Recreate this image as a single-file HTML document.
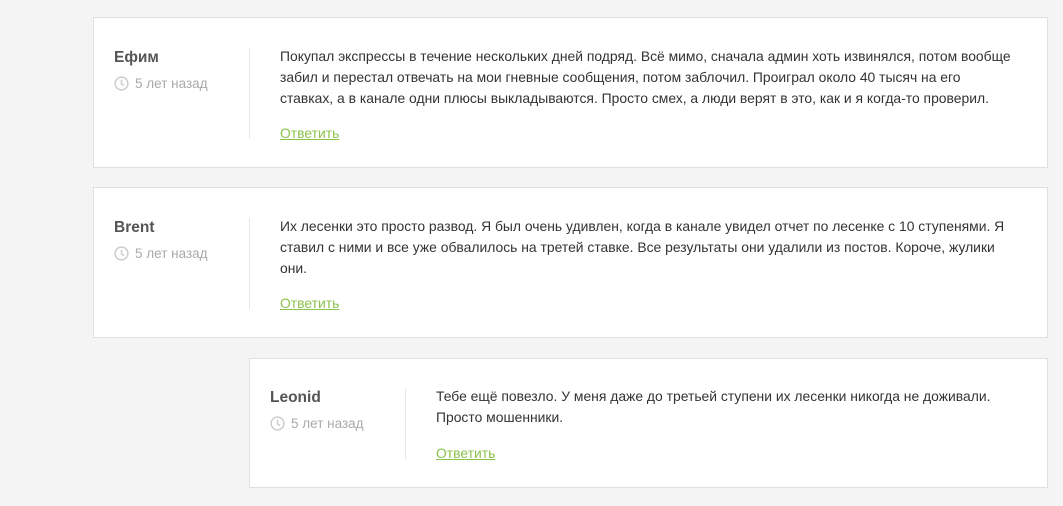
<!DOCTYPE html>
<html><head><meta charset="utf-8"><style>
body{margin:0;background:#f4f4f4;width:1063px;height:506px;overflow:hidden;font-family:"Liberation Sans",sans-serif;position:relative}
.card{position:absolute;background:#fff;border:1px solid #e0e0e0;box-sizing:border-box}
.name{position:absolute;font-weight:bold;font-size:15.5px;color:#555}
.time{position:absolute;font-size:13.5px;color:#aaa;display:flex;align-items:center}
.time svg{margin-right:6px}
.div{position:absolute;width:1px;background:#e6e6e6;height:91px}
.txt{position:absolute;font-size:13.9px;line-height:21px;color:#333}
.rep{position:absolute;font-size:13.9px;color:#8bc34a;text-decoration:underline}
</style></head><body>
<div class="card" style="left:93px;top:17px;width:955px;height:151px">
<div class="name" style="left:20px;top:31px">Ефим</div>
<div class="time" style="left:20px;top:58px"><svg width="15" height="15" viewBox="0 0 16 16"><circle cx="8" cy="8" r="6.8" fill="none" stroke="#ccc" stroke-width="1.6"/><path d="M8 4v4.3l2.6 2" fill="none" stroke="#ccc" stroke-width="1.6"/></svg>5 лет назад</div>
<div class="div" style="left:155px;top:30px"></div>
<div class="txt" style="left:186px;top:28px;width:733px">Покупал экспрессы в течение нескольких дней подряд. Всё мимо, сначала админ хоть извинялся, потом вообще забил и перестал отвечать на мои гневные сообщения, потом заблочил. Проиграл около 40 тысяч на его ставках, а в канале одни плюсы выкладываются. Просто смех, а люди верят в это, как и я когда-то проверил.</div>
<div class="rep" style="left:186px;top:107px">Ответить</div>
</div>
<div class="card" style="left:93px;top:187px;width:955px;height:151px">
<div class="name" style="left:20px;top:31px">Brent</div>
<div class="time" style="left:20px;top:58px"><svg width="15" height="15" viewBox="0 0 16 16"><circle cx="8" cy="8" r="6.8" fill="none" stroke="#ccc" stroke-width="1.6"/><path d="M8 4v4.3l2.6 2" fill="none" stroke="#ccc" stroke-width="1.6"/></svg>5 лет назад</div>
<div class="div" style="left:155px;top:30px"></div>
<div class="txt" style="left:186px;top:28px;width:740px">Их лесенки это просто развод. Я был очень удивлен, когда в канале увидел отчет по лесенке с 10 ступенями. Я ставил с ними и все уже обвалилось на третей ставке. Все результаты они удалили из постов. Короче, жулики они.</div>
<div class="rep" style="left:186px;top:107px">Ответить</div>
</div>
<div class="card" style="left:249px;top:358px;width:799px;height:130px">
<div class="name" style="left:20px;top:30px">Leonid</div>
<div class="time" style="left:20px;top:57px"><svg width="15" height="15" viewBox="0 0 16 16"><circle cx="8" cy="8" r="6.8" fill="none" stroke="#ccc" stroke-width="1.6"/><path d="M8 4v4.3l2.6 2" fill="none" stroke="#ccc" stroke-width="1.6"/></svg>5 лет назад</div>
<div class="div" style="left:155px;top:29px;height:72px"></div>
<div class="txt" style="left:186px;top:27px;width:585px">Тебе ещё повезло. У меня даже до третьей ступени их лесенки никогда не доживали. Просто мошенники.</div>
<div class="rep" style="left:186px;top:86px">Ответить</div>
</div>
</body></html>
